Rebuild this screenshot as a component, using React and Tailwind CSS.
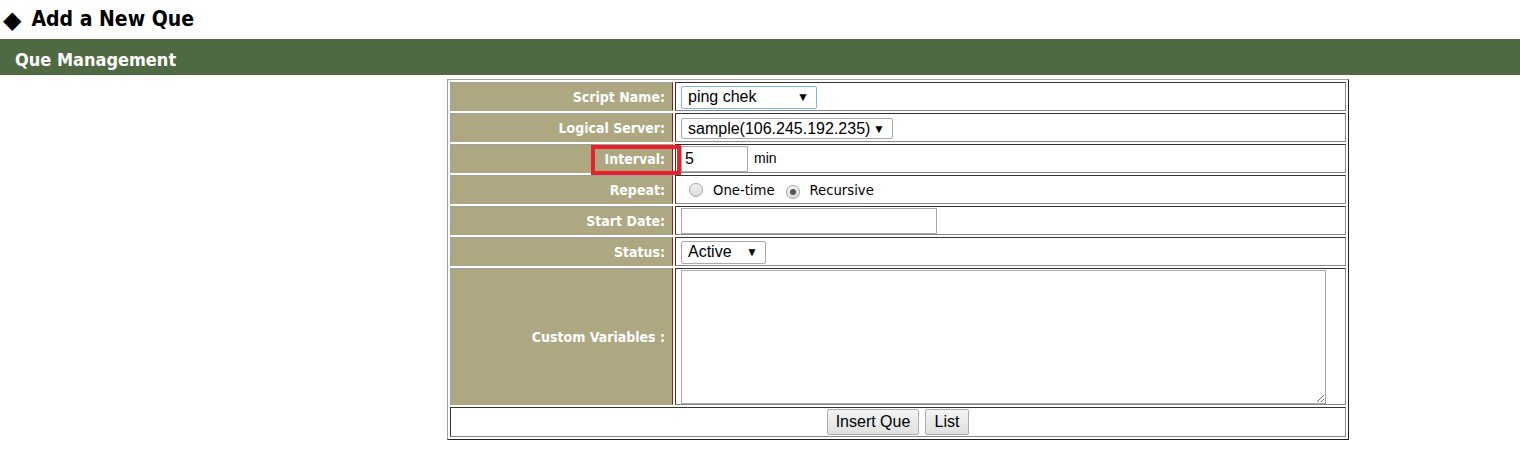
import React from 'react';

const labelFont = { fontFamily: '"DejaVu Sans Condensed", "DejaVu Sans", sans-serif' };
const arial = { fontFamily: '"Liberation Sans", Arial, sans-serif' };

const Label = ({ children, tall }) => (
  <td
    className={`w-[223px] ${tall ? 'h-[137px]' : 'h-[29px]'} bg-[#ada882] border-t border-l border-b border-r border-t-[#a0a0a0] border-l-[#a0a0a0] border-b-[#ada882] border-r-[#9b1c1c] pr-[7px] pt-[1px] text-right align-middle text-[14px] font-bold text-white`}
    style={labelFont}
  >
    {children}
  </td>
);

const Value = ({ children }) => (
  <td className="border border-t-[#333] border-l-[#333] border-b-[#888] border-r-[#888] pl-[5px] align-middle">
    {children}
  </td>
);

const FakeSelect = ({ value, width, height, focused }) => (
  <div
    className={`inline-flex items-center justify-between bg-white border ${focused ? 'border-[#7eb4ea]' : 'border-[#a9a9a9]'} rounded-[2px] pl-[6px] pr-[7px] text-[16px] text-black ${width} ${height}`}
    style={arial}
  >
    <span>{value}</span>
    <span className="text-[12px] leading-none">▼</span>
  </div>
);

const Radio = ({ checked }) => (
  <span className="inline-flex items-center justify-center w-[14px] h-[14px] rounded-full border border-[#a4a4a4] bg-gradient-to-b from-[#f2f2f2] to-[#dcdcdc]">
    {checked && <span className="w-[6px] h-[6px] rounded-full bg-[#555]" />}
  </span>
);

export default function App() {
  return (
    <div className="w-[1520px] h-[460px] bg-white overflow-hidden">
      {/* Page title */}
      <div className="h-[39px] flex items-center pl-[3px] pt-[1px]" style={labelFont}>
        <span className="text-[24px] leading-none text-black mr-[10px]" style={{ fontFamily: '"DejaVu Sans", sans-serif' }}>◆</span>
        <h1 className="text-[21px] font-bold text-black">Add a New Que</h1>
      </div>

      {/* Section bar */}
      <div className="h-[36px] bg-[#4f6a42] flex items-center pl-[15px] pt-[4px]" style={labelFont}>
        <span className="text-[18px] font-bold text-white">Que Management</span>
      </div>

      {/* Form table */}
      <div className="pt-[4px] pl-[447px] relative">
        <table className="w-[902px] border-separate border-spacing-[2px] border border-t-[#a0a0a0] border-l-[#a0a0a0] border-b-[#222] border-r-[#222]">
          <tbody>
            <tr>
              <Label>Script Name:</Label>
              <Value>
                <FakeSelect value="ping chek" width="w-[136px]" height="h-[23px]" focused />
              </Value>
            </tr>
            <tr>
              <Label>Logical Server:</Label>
              <Value>
                <FakeSelect value="sample(106.245.192.235)" width="w-[212px]" height="h-[21px]" />
              </Value>
            </tr>
            <tr>
              <Label>Interval:</Label>
              <Value>
                <div className="flex items-center gap-[6px]">
                  <input
                    readOnly
                    value="5"
                    className="w-[67px] h-[26px] border border-[#a9a9a9] px-[3px] text-[16px] text-black outline-none"
                    style={arial}
                  />
                  <span className="text-[14px] text-black" style={arial}>min</span>
                </div>
              </Value>
            </tr>
            <tr>
              <Label>Repeat:</Label>
              <Value>
                <div className="flex items-center pl-[8px] pt-[2px] text-[14.7px] text-black" style={labelFont}>
                  <Radio />
                  <span className="ml-[10px]">One-time</span>
                  <span className="ml-[11px]"><Radio checked /></span>
                  <span className="ml-[10px]">Recursive</span>
                </div>
              </Value>
            </tr>
            <tr>
              <Label>Start Date:</Label>
              <Value>
                <input readOnly className="block w-[256px] h-[26px] border border-[#a9a9a9] outline-none" />
              </Value>
            </tr>
            <tr>
              <Label>Status:</Label>
              <Value>
                <FakeSelect value="Active" width="w-[85px]" height="h-[23px]" />
              </Value>
            </tr>
            <tr>
              <Label tall>Custom Variables :</Label>
              <Value>
                <textarea readOnly className="block w-[645px] h-[134px] border border-[#a9a9a9] outline-none" />
              </Value>
            </tr>
            <tr>
              <td colSpan={2} className="h-[30px] border border-t-[#333] border-l-[#333] border-b-[#888] border-r-[#888] text-center align-middle">
                <div className="inline-flex gap-[6px]" style={arial}>
                  <button className="h-[26px] w-[92px] border border-[#adadad] rounded-[2px] bg-gradient-to-b from-[#f4f4f4] to-[#e0e0e0] text-[16px] text-black">Insert Que</button>
                  <button className="h-[26px] w-[44px] border border-[#adadad] rounded-[2px] bg-gradient-to-b from-[#f4f4f4] to-[#e0e0e0] text-[16px] text-black">List</button>
                </div>
              </td>
            </tr>
          </tbody>
        </table>

        {/* annotation box around Interval label */}
        <div className="absolute left-[591px] top-[70px] w-[90px] h-[30px] border-[4px] border-[#e8202a] pointer-events-none" />
      </div>
    </div>
  );
}
